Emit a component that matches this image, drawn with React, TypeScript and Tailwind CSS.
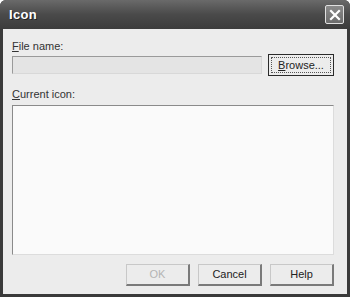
import React from "react";

function Btn({ label, disabled }: { label: string; disabled?: boolean }) {
  return (
    <div className="w-[64px] h-[22px] flex items-center justify-center bg-[#ececec] border border-[#c8c8c8] border-r-2 border-b-2 border-r-[#7a7a7a] border-b-[#7a7a7a]">
      <span className={disabled ? "text-[#b4b4b4]" : "text-[#222]"}>{label}</span>
    </div>
  );
}

export default function App() {
  return (
    <div className="w-[350px] h-[299px] bg-white" style={{ fontFamily: '"Liberation Sans", Arial, sans-serif' }}>
      <div className="w-[350px] h-[297px] flex flex-col bg-[#3a3a3a] rounded-t-[6px] px-[3px] pb-[3px]">
        <div className="h-[29px] flex items-center justify-between bg-gradient-to-b from-[#6a6a6a] via-[#4a4a4a] to-[#3c3c3c] rounded-t-[6px] -mx-[3px] pl-[9px] pr-[6px]">
          <span className="text-white font-bold text-[13px] tracking-[0.3px] mt-[1px] [text-shadow:1px_1px_0_#222]">Icon</span>
          <div className="w-[19px] h-[19px] border border-[#e0e0e0] rounded-[2px] bg-gradient-to-b from-[#8a8a8a] to-[#6c6c6c] flex items-center justify-center">
            <svg width="12" height="12" viewBox="0 0 12 12">
              <path d="M2 2 L10 10 M10 2 L2 10" stroke="#ffffff" strokeWidth="2.2" strokeLinecap="square" />
            </svg>
          </div>
        </div>
        <div className="flex-1 bg-[#ececec] pl-[9px] pr-[13px] pt-[10px] text-[11px] text-[#333] flex flex-col">
          <div className="h-[14px] leading-[14px]"><span className="underline">F</span>ile name:</div>
          <div className="flex items-center gap-[6px] mt-[1px]">
            <div className="flex-1 h-[18px] bg-[#e4e4e4] border border-[#9a9a9a] border-b-[#d8d8d8] border-r-[#d8d8d8]" />
            <div className="w-[66px] h-[22px] border border-[#2a2a2a] bg-[#ececec] p-[2px]">
              <div className="w-full h-full border border-dotted border-[#555] flex items-center justify-center text-[#222]">
                <span><span className="underline">B</span>rowse...</span>
              </div>
            </div>
          </div>
          <div className="h-[14px] leading-[14px] mt-[11px]"><span className="underline">C</span>urrent icon:</div>
          <div className="h-[150px] mt-[4px] bg-[#fafafa] border border-[#8a8a8a] border-b-[#dcdcdc] border-r-[#dcdcdc]" />
          <div className="flex justify-end gap-[8px] mt-[9px]">
            <Btn label="OK" disabled />
            <Btn label="Cancel" />
            <Btn label="Help" />
          </div>
        </div>
      </div>
    </div>
  );
}
